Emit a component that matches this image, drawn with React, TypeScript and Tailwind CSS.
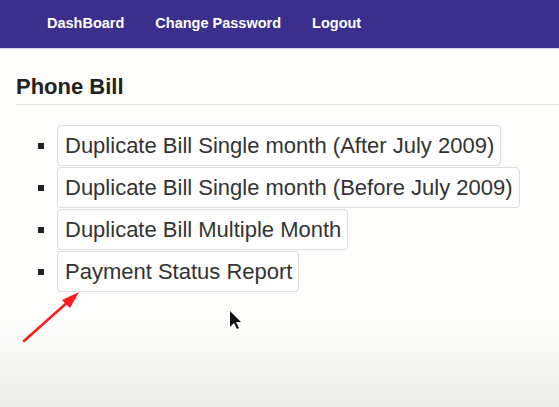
import React from "react";

const items = [
  "Duplicate Bill Single month (After July 2009)",
  "Duplicate Bill Single month (Before July 2009)",
  "Duplicate Bill Multiple Month",
  "Payment Status Report",
];

export default function App() {
  return (
    <div
      className="relative w-[559px] h-[407px] overflow-hidden bg-[linear-gradient(to_bottom,#fdfdfb_0%,#fdfdfb_80%,#ebebe9_100%)]"
      style={{ fontFamily: '"Liberation Sans", Arial, sans-serif' }}
    >
      <nav className="h-[49px] bg-[#3b2f8e] flex items-center pl-[47px] gap-[31px] border-b border-[#d8d6e6]">
        <span className="text-white font-bold text-[14.5px]">DashBoard</span>
        <span className="text-white font-bold text-[14.5px]">Change Password</span>
        <span className="text-white font-bold text-[14.5px]">Logout</span>
      </nav>
      <div className="pl-4 pt-[26px]">
        <h1 className="text-[22px] font-bold text-[#222] leading-[24px] pb-[5px] border-b border-[#e6e6e4]">
          Phone Bill
        </h1>
        <ul className="mt-[20px] pl-[22px] flex flex-col gap-[1px]">
          {items.map((t) => (
            <li key={t} className="flex items-center">
              <span className="w-[6px] h-[6px] bg-[#222] mr-[13px]" />
              <span className="h-[41px] flex items-center pl-[7px] pr-[6px] border border-[#dcdcdc] rounded-[4px] bg-white text-[22px] text-[#333]">
                {t}
              </span>
            </li>
          ))}
        </ul>
      </div>
      <svg className="absolute left-0 top-0" width="559" height="407">
        <line x1="24" y1="341" x2="70" y2="300" stroke="#ff1a1a" strokeWidth="2.5" strokeLinecap="round" />
        <polygon points="79,292 62,300 70,308" fill="#ff1a1a" />
        <path d="M230 311 L230 327 L234 323 L237 329 L239 328 L236 322 L241 322 Z" fill="#111" />
      </svg>
    </div>
  );
}
